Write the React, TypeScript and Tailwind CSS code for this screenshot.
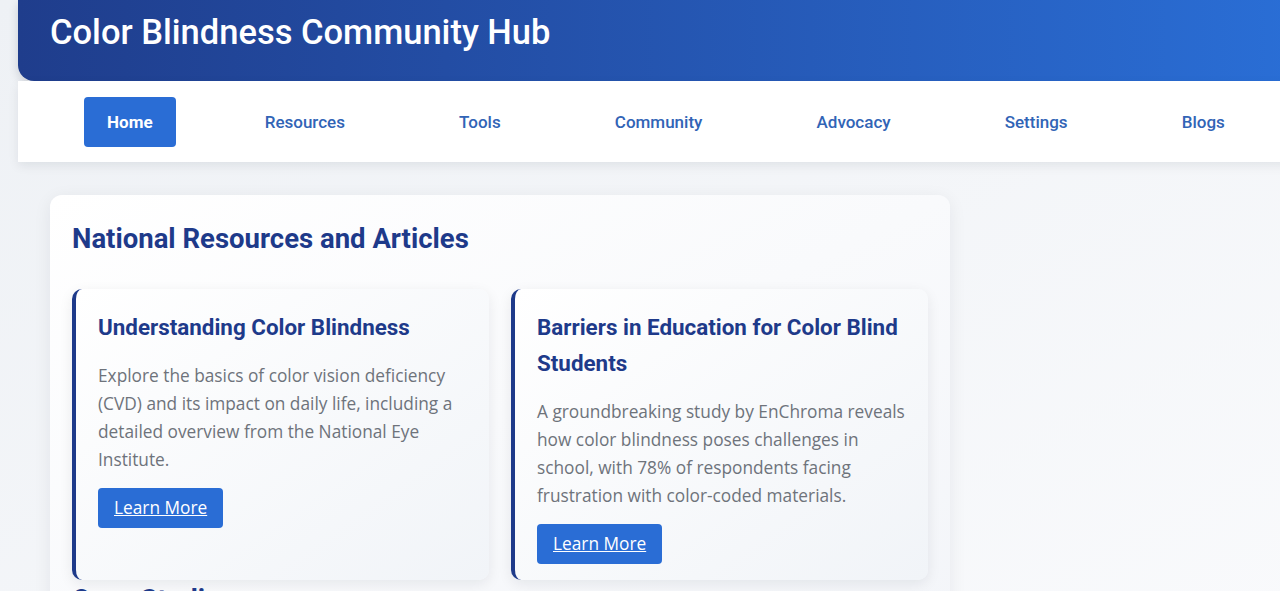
const navItems = ["Home", "Resources", "Tools", "Community", "Advocacy", "Settings", "Blogs"];

const articles = [
  {
    title: "Understanding Color Blindness",
    body: "Explore the basics of color vision deficiency (CVD) and its impact on daily life, including a detailed overview from the National Eye Institute.",
  },
  {
    title: "Barriers in Education for Color Blind Students",
    body: "A groundbreaking study by EnChroma reveals how color blindness poses challenges in school, with 78% of respondents facing frustration with color-coded materials.",
  },
];

function ArticleCard({ title, body }: { title: string; body: string }) {
  return (
    <div className="rounded-[10px] border-l-4 border-[#1e3a8a] bg-gradient-to-br from-white to-[#f1f4f8] pl-[22px] pr-4 pt-5 pb-4 shadow-[0_4px_14px_rgba(15,23,42,0.08)]">
      <h3 className="text-[22.4px] font-bold leading-[36px] text-[#1e3a8a] [font-family:Roboto,sans-serif]">
        {title}
      </h3>
      <p className="mt-[17px] text-[17.3px] leading-[28px] text-[#6e737b] [font-family:'Open_Sans',sans-serif]">
        {body}
      </p>
      <a
        href="#"
        className="mt-[14px] inline-block rounded-[4px] bg-[#2a6dd5] px-4 py-[6px] text-[17.3px] leading-[28px] text-white underline [font-family:'Open_Sans',sans-serif]"
      >
        Learn More
      </a>
    </div>
  );
}

export default function App() {
  return (
    <div className="min-h-[591px] w-full overflow-hidden bg-gradient-to-br from-[#eef1f5] to-[#f9fafc]">
      <div className="ml-[18px] w-[1300px]">
        <header className="h-[81px] rounded-bl-[16px] bg-gradient-to-r from-[#1f3d8c] to-[#2a6fd7] pl-8 pt-[10px] shadow-[0_4px_10px_rgba(15,23,42,0.15)]">
          <h1 className="text-[34.5px] font-medium leading-[44px] text-white [font-family:Roboto,sans-serif]">
            Color Blindness Community Hub
          </h1>
        </header>
        <nav className="flex h-[81px] items-center justify-around bg-white pl-[34px] pr-[36px] shadow-[0_4px_10px_rgba(15,23,42,0.08)]">
          {navItems.map((item) => (
            <a
              key={item}
              href="#"
              className={
                item === "Home"
                  ? "rounded-[4px] bg-[#2a6dd5] px-[23px] py-[11px] text-[17px] font-bold leading-[28px] text-white [font-family:Roboto,sans-serif]"
                  : "px-[25px] py-[11px] text-[17px] font-medium leading-[28px] text-[#3164b6] [font-family:Roboto,sans-serif]"
              }
            >
              {item}
            </a>
          ))}
        </nav>
      </div>

      <main className="ml-[50px] mt-[33px] w-[900px] rounded-[12px] bg-gradient-to-br from-white to-[#f3f5f9] p-[22px] shadow-[0_4px_18px_rgba(15,23,42,0.07)]">
        <h2 className="mt-[1px] text-[27.5px] font-bold leading-[42px] text-[#1e3a8a] [font-family:Roboto,sans-serif]">
          National Resources and Articles
        </h2>
        <div className="mt-[29px] grid grid-cols-2 gap-[22px]">
          {articles.map((a) => (
            <ArticleCard key={a.title} title={a.title} body={a.body} />
          ))}
        </div>
        <h2 className="mt-[4px] text-[27.5px] font-bold leading-[32px] text-[#1e3a8a] [font-family:Roboto,sans-serif]">
          Case Studies
        </h2>
      </main>
    </div>
  );
}
